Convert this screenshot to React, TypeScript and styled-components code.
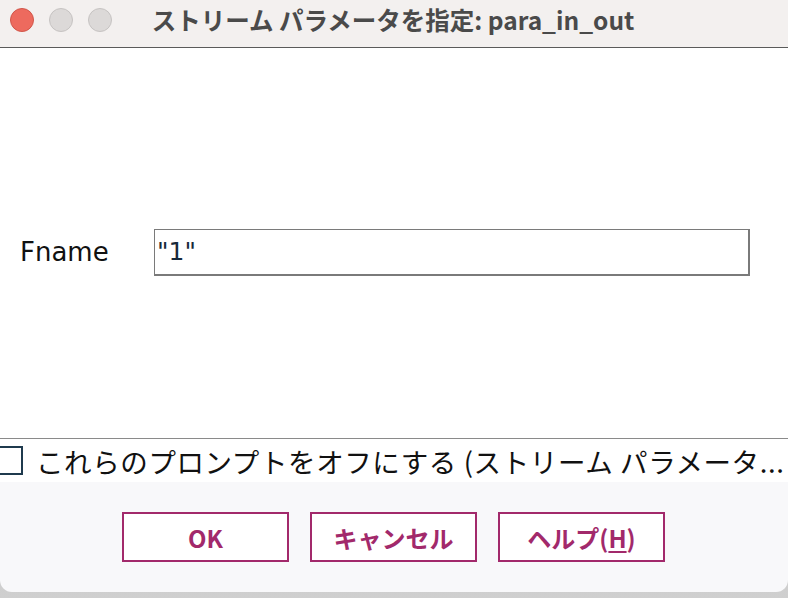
import React from "react";
import styled, { createGlobalStyle } from "styled-components";

const Global = createGlobalStyle`
  html, body { margin: 0; padding: 0; }
  body {
    width: 788px;
    height: 598px;
    overflow: hidden;
    background: linear-gradient(#a9a9a9, #cfcfcf);
  }
`;

const Window = styled.div`
  width: 788px;
  height: 592px;
  display: flex;
  flex-direction: column;
  border-radius: 0 0 12px 12px;
  overflow: hidden;
  background: #f8f8fa;
`;

const TitleBar = styled.div`
  height: 47px;
  flex: none;
  background: #f3f0ef;
  border-bottom: 1px solid #5a5a5a;
  position: relative;
  display: flex;
  align-items: center;
  justify-content: center;
`;

const Lights = styled.div`
  position: absolute;
  left: 10px;
  top: 8px;
  display: flex;
  gap: 15px;
`;

const Light = styled.span<{ $red?: boolean }>`
  width: 24px;
  height: 24px;
  box-sizing: border-box;
  border-radius: 50%;
  background: ${(p) => (p.$red ? "#ed6a5e" : "#dcd9d8")};
  border: 1px solid ${(p) => (p.$red ? "#d1564a" : "#c6c3c2")};
`;

const Title = styled.div`
  font-family: "Noto Sans CJK JP", "Noto Sans", sans-serif;
  font-weight: 700;
  font-size: 24.5px;
  color: #4a4a4a;
  margin-top: -8px;
  padding-right: 2px;
`;

const Content = styled.div`
  flex: 1;
  background: #ffffff;
  display: flex;
  align-items: center;
  padding: 0 38px 0 20px;
  border-bottom: 1px solid #8a8a8a;
`;

const FieldRow = styled.div`
  display: flex;
  align-items: center;
  width: 100%;
  margin-top: 18px;
`;

const Label = styled.div`
  width: 134px;
  font-family: "DejaVu Sans", sans-serif;
  font-size: 26px;
  color: #111;
`;

const Input = styled.div`
  flex: 1;
  height: 47px;
  box-sizing: border-box;
  border: 1px solid #7a7a7a;
  border-right-width: 2px;
  border-bottom-width: 2px;
  display: flex;
  align-items: center;
  padding-left: 2px;
  font-family: "DejaVu Sans", sans-serif;
  font-size: 25px;
  color: #17293a;
`;

const CheckRow = styled.div`
  height: 43px;
  flex: none;
  background: #ffffff;
  display: flex;
  align-items: center;
  gap: 13px;
  margin-left: -6px;
`;

const Box = styled.span`
  width: 29px;
  height: 29px;
  box-sizing: border-box;
  border: 2px solid #1f3a4e;
  flex: none;
`;

const CheckText = styled.span`
  font-family: "Noto Sans CJK JP", sans-serif;
  font-size: 27.5px;
  color: #111;
  white-space: nowrap;
  letter-spacing: 0.6px;
`;

const Footer = styled.div`
  height: 110px;
  flex: none;
  display: flex;
  justify-content: center;
  align-items: flex-start;
  gap: 21px;
  padding-top: 30px;
  box-sizing: border-box;
  padding-right: 1px;
`;

const Button = styled.button`
  width: 167px;
  height: 50px;
  box-sizing: border-box;
  border: 2px solid #a2296b;
  background: #ffffff;
  color: #a2296b;
  font-family: "Noto Sans CJK JP", sans-serif;
  font-weight: 700;
  font-size: 24px;
  padding: 0;
  display: flex;
  align-items: center;
  justify-content: center;
`;

const U = styled.span`
  text-decoration: underline;
  text-underline-offset: 3px;
`;

export default function App() {
  return (
    <>
      <Global />
      <Window>
        <TitleBar>
          <Lights>
            <Light $red />
            <Light />
            <Light />
          </Lights>
          <Title>ストリーム パラメータを指定: para_in_out</Title>
        </TitleBar>
        <Content>
          <FieldRow>
            <Label>Fname</Label>
            <Input>"1"</Input>
          </FieldRow>
        </Content>
        <CheckRow>
          <Box />
          <CheckText>これらのプロンプトをオフにする (ストリーム パラメータ...</CheckText>
        </CheckRow>
        <Footer>
          <Button>OK</Button>
          <Button>キャンセル</Button>
          <Button>
            ヘルプ(<U>H</U>)
          </Button>
        </Footer>
      </Window>
    </>
  );
}
